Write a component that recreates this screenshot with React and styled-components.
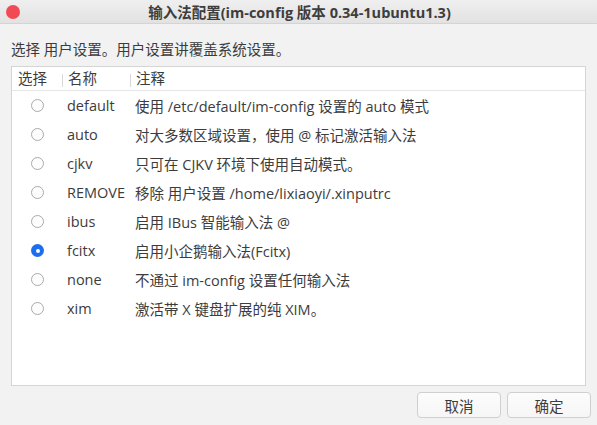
import React from "react";
import styled, { createGlobalStyle } from "styled-components";

const GlobalStyle = createGlobalStyle`
  html, body {
    margin: 0;
    padding: 0;
    background: #f2f2f2;
  }
  body {
    font-family: "Open Sans", "Noto Sans CJK SC", sans-serif;
    color: #3c3c3c;
  }
`;

const Window = styled.div`
  width: 597px;
  height: 425px;
  display: flex;
  flex-direction: column;
  background: #f2f2f2;
  overflow: hidden;
`;

const TitleBar = styled.div`
  height: 24px;
  flex: none;
  display: flex;
  align-items: center;
  justify-content: center;
  position: relative;
  background: linear-gradient(#efefef, #e2e2e2);
  border-bottom: 1px solid #d4d4d4;
  box-sizing: border-box;
`;

const CloseDot = styled.span`
  position: absolute;
  left: 6px;
  top: 5px;
  width: 14px;
  height: 14px;
  border-radius: 50%;
  background: #f14a55;
`;

const Title = styled.div`
  font-size: 14.5px;
  font-weight: 700;
  color: #3d3d3d;
  padding-left: 2px;
  white-space: nowrap;
`;

const Body = styled.div`
  flex: 1;
  display: flex;
  flex-direction: column;
  padding: 16px 0 7px;
`;

const Label = styled.div`
  font-size: 14.5px;
  line-height: 20px;
  padding-left: 11px;
  margin-bottom: 6px;
  white-space: nowrap;
`;

const ListBox = styled.div`
  margin: 0 11px;
  height: 320px;
  box-sizing: border-box;
  border: 1px solid #d5d5d5;
  background: #fff;
`;

const Row = styled.div`
  display: grid;
  grid-template-columns: 50px 68px 1fr;
  align-items: center;
  height: ${({ $head }) => ($head ? "23px" : "29px")};
  border-bottom: ${({ $head }) => ($head ? "1px solid #e6e6e6" : "none")};
  font-size: 14.5px;
  white-space: nowrap;
`;

const HeadCell = styled.div`
  padding-left: 6px;
  position: relative;
  line-height: 20px;
  &::before {
    content: "";
    display: ${({ $sep }) => ($sep ? "block" : "none")};
    position: absolute;
    left: 0;
    top: 5px;
    height: 13px;
    border-left: 1px solid #d8d8d8;
  }
`;

const RadioCell = styled.div`
  display: flex;
  justify-content: center;
  padding-left: 1px;
`;

const Radio = styled.span`
  width: 13px;
  height: 13px;
  box-sizing: border-box;
  border-radius: 50%;
  border: ${({ $on }) => ($on ? "none" : "1px solid #aaaaaa")};
  background: ${({ $on }) => ($on ? "#1a6ff0" : "#fdfdfd")};
  display: flex;
  align-items: center;
  justify-content: center;
  &::after {
    content: "";
    display: ${({ $on }) => ($on ? "block" : "none")};
    width: 4px;
    height: 4px;
    border-radius: 50%;
    background: #fff;
  }
`;

const Cell = styled.div`
  padding-left: 5px;
`;

const ButtonBar = styled.div`
  display: flex;
  justify-content: flex-end;
  gap: 6px;
  padding: 6px 6px 0 0;
`;

const Button = styled.button`
  width: 84px;
  height: 26px;
  font-family: inherit;
  font-size: 14.5px;
  color: #3c3c3c;
  background: linear-gradient(#fcfcfc, #f6f6f6);
  border: 1px solid #cfcfcf;
  border-radius: 4px;
  padding: 0;
`;

const options = [
  ["default", "使用 /etc/default/im-config 设置的 auto 模式"],
  ["auto", "对大多数区域设置，使用 @ 标记激活输入法"],
  ["cjkv", "只可在 CJKV 环境下使用自动模式。"],
  ["REMOVE", "移除 用户设置 /home/lixiaoyi/.xinputrc"],
  ["ibus", "启用 IBus 智能输入法 @"],
  ["fcitx", "启用小企鹅输入法(Fcitx)"],
  ["none", "不通过 im-config 设置任何输入法"],
  ["xim", "激活带 X 键盘扩展的纯 XIM。"],
];

export default function App() {
  const [selected, setSelected] = React.useState("fcitx");

  return (
    <>
      <GlobalStyle />
      <Window>
        <TitleBar>
          <CloseDot />
          <Title>输入法配置(im-config 版本 0.34-1ubuntu1.3)</Title>
        </TitleBar>
        <Body>
          <Label>选择 用户设置。用户设置讲覆盖系统设置。</Label>
          <ListBox>
            <Row $head>
              <HeadCell>选择</HeadCell>
              <HeadCell $sep>名称</HeadCell>
              <HeadCell $sep>注释</HeadCell>
            </Row>
            {options.map(([name, note]) => (
              <Row key={name} onClick={() => setSelected(name)}>
                <RadioCell>
                  <Radio $on={selected === name} />
                </RadioCell>
                <Cell>{name}</Cell>
                <Cell>{note}</Cell>
              </Row>
            ))}
          </ListBox>
          <ButtonBar>
            <Button>取消</Button>
            <Button>确定</Button>
          </ButtonBar>
        </Body>
      </Window>
    </>
  );
}
